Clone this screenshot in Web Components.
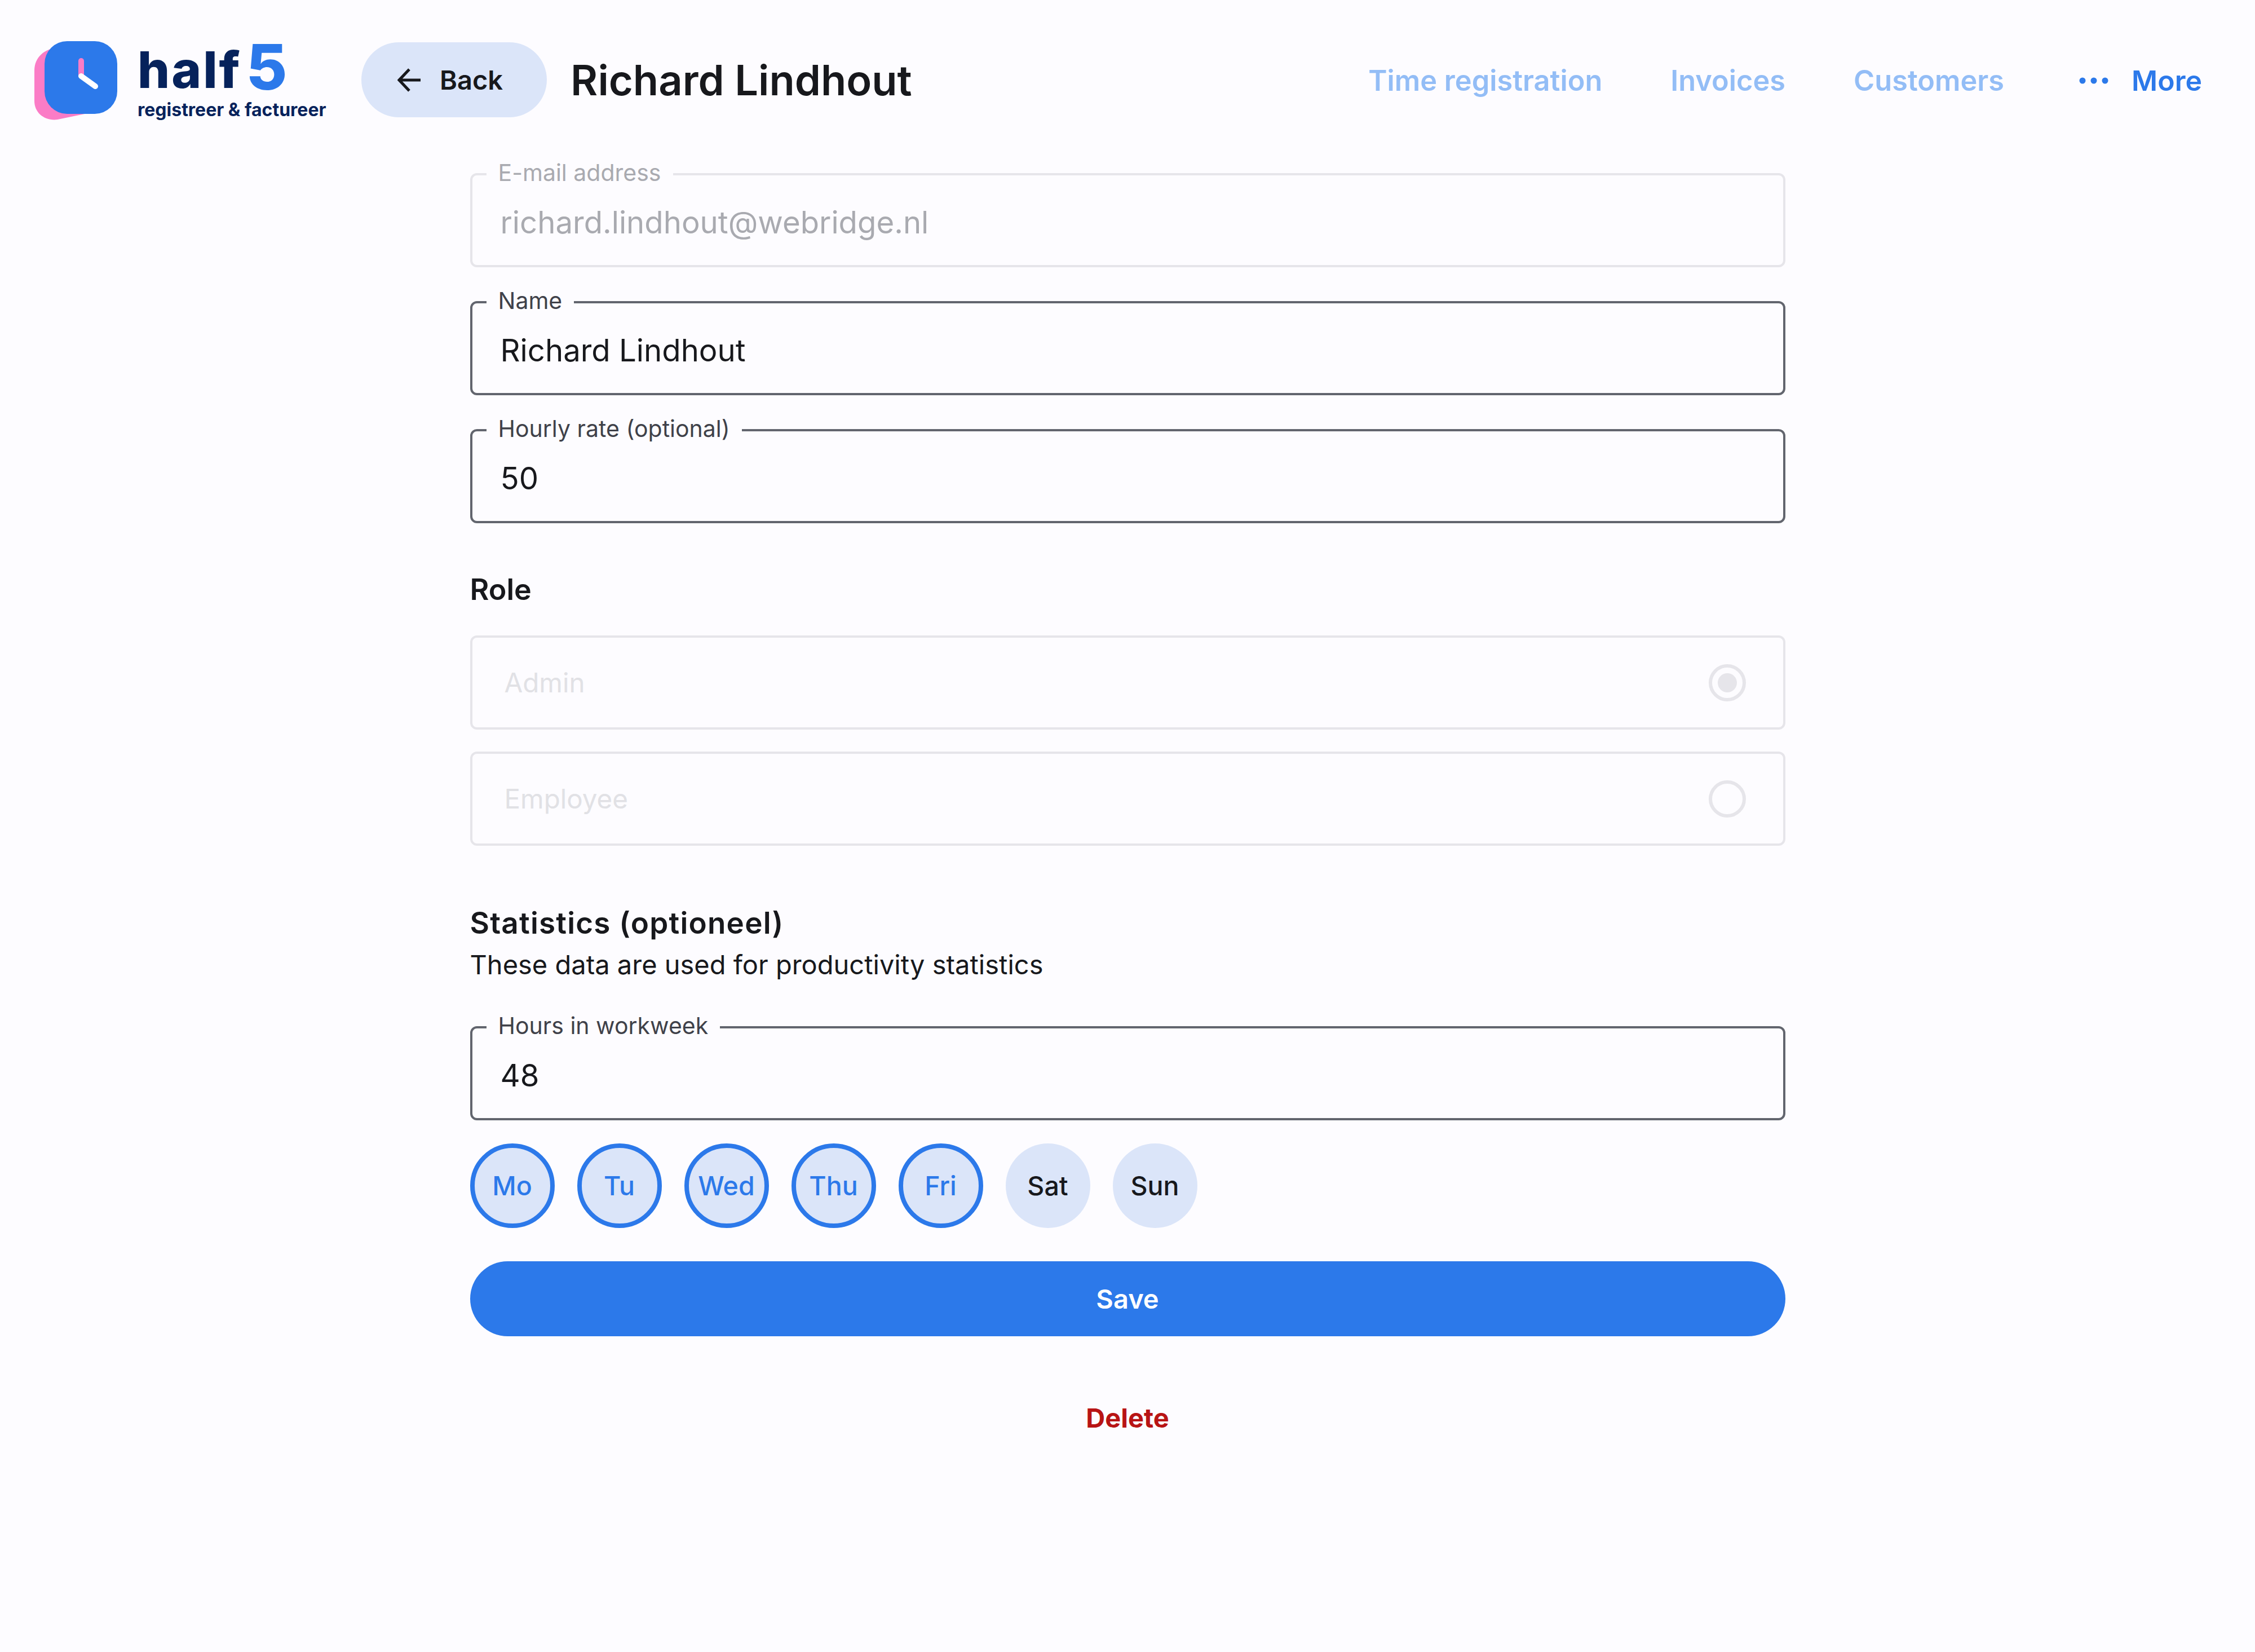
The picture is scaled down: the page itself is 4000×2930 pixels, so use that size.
<!DOCTYPE html>
<html>
<head>
<meta charset="utf-8">
<title>half5</title>
<style>
  html, body { margin: 0; background: #fdfcff; }
  body { font-family: "Inter", "Liberation Sans", sans-serif; color: #17181c; min-height: 2930px; }
</style>
</head>
<body>
<app-page>
  <app-header title="Richard Lindhout"></app-header>
  <main-form></main-form>
</app-page>
<script>
class AppPage extends HTMLElement {
  constructor() {
    super();
    this.attachShadow({ mode: "open" });
    this.shadowRoot.innerHTML = `
      <style>:host { display: block; }</style>
      <slot></slot>
    `;
  }
}

class BrandLogo extends HTMLElement {
  constructor() {
    super();
    this.attachShadow({ mode: "open" });
    this.shadowRoot.innerHTML = `
      <style>
        :host { display: flex; align-items: flex-start; gap: 35px; width: 520px; }
        svg { display: block; }
        .text { display: flex; flex-direction: column; }
        .name { display: flex; align-items: flex-end; height: 90px; color: #06225b; font-family: "Inter", sans-serif; font-weight: 800; font-size: 90px; line-height: 90px; letter-spacing: 3px; margin-top: 6px; }
        .five { color: #2c79ea; font-size: 112px; line-height: 90px; letter-spacing: 0; margin-left: 8px; position: relative; top: -6px; }
        .tag { color: #06225b; font-family: "Inter", sans-serif; font-weight: 700; font-size: 32px; line-height: 40px; margin-top: 6px; white-space: nowrap; }
      </style>
      <svg width="149" height="140" viewBox="0 0 149 140">
        <path d="M45 11C18 13 1 29 1 52V106C1 128 20 142 42 139L100 127V11Z" fill="#fb7cc6"/>
        <rect x="19" y="0" width="129" height="129" rx="40" fill="#2c79ea"/>
        <path d="M84 35V60" stroke="#fb7cc6" stroke-width="10" stroke-linecap="round"/>
        <path d="M84 62L109 80" stroke="#fff" stroke-width="10" stroke-linecap="round"/>
      </svg>
      <div class="text">
        <div class="name"><span>half</span><span class="five">5</span></div>
        <div class="tag">registreer &amp; factureer</div>
      </div>
    `;
  }
}

class BackButton extends HTMLElement {
  constructor() {
    super();
    this.attachShadow({ mode: "open" });
    this.shadowRoot.innerHTML = `
      <style>
        :host { display: flex; align-items: center; gap: 33px; height: 133px; box-sizing: border-box; padding: 0 78px 0 64px; border-radius: 67px; background: #dbe5f9; font-size: 47px; font-weight: 600; color: #17181c; }
        svg { display: block; }
      </style>
      <svg width="42" height="42" viewBox="0 0 42 42" fill="none" stroke="#17181c" stroke-width="5">
        <path d="M41 21H4M21 2L3 21L21 40"/>
      </svg>
      <span><slot></slot></span>
    `;
  }
}

class NavLink extends HTMLElement {
  constructor() {
    super();
    this.attachShadow({ mode: "open" });
    this.shadowRoot.innerHTML = `
      <style>
        :host { display: block; color: #93bdf6; font-size: 50.5px; font-weight: 600; white-space: nowrap; }
      </style>
      <slot></slot>
    `;
  }
}

class MoreMenu extends HTMLElement {
  constructor() {
    super();
    this.attachShadow({ mode: "open" });
    this.shadowRoot.innerHTML = `
      <style>
        :host { display: flex; align-items: center; gap: 41px; color: #2c79ea; font-size: 50px; font-weight: 600; }
        svg { display: block; }
      </style>
      <svg width="52" height="12" viewBox="0 0 52 12" fill="#2c79ea">
        <circle cx="6" cy="6" r="5.5"/><circle cx="26" cy="6" r="5.5"/><circle cx="46" cy="6" r="5.5"/>
      </svg>
      <span>More</span>
    `;
  }
}

class AppHeader extends HTMLElement {
  constructor() {
    super();
    this.attachShadow({ mode: "open" });
    this.shadowRoot.innerHTML = `
      <style>
        :host { display: flex; align-items: center; padding: 74px 94px 0 60px; height: 139px; }
        back-button { margin-left: 61px; margin-top: -4px; }
        h1 { margin: -4px 0 0 42px; font-size: 74px; font-weight: 600; color: #17181c; }
        nav { margin-left: auto; display: flex; align-items: center; gap: 121px; margin-top: -2px; }
        more-menu { margin-left: 12px; }
      </style>
      <brand-logo></brand-logo>
      <back-button>Back</back-button>
      <h1>${this.getAttribute("title")}</h1>
      <nav>
        <nav-link>Time registration</nav-link>
        <nav-link>Invoices</nav-link>
        <nav-link>Customers</nav-link>
        <more-menu></more-menu>
      </nav>
    `;
  }
}

class TextField extends HTMLElement {
  constructor() {
    super();
    this.attachShadow({ mode: "open" });
    const disabled = this.hasAttribute("disabled");
    this.shadowRoot.innerHTML = `
      <style>
        :host { display: block; position: relative; box-sizing: border-box; height: 167px; border: 4px solid ${disabled ? "#e6e5ea" : "#62656e"}; border-radius: 12px; }
        .label { position: absolute; left: 25px; top: -29px; padding: 0 21px; background: #fdfcff; color: ${disabled ? "#a9aab0" : "#3f4149"}; font-size: 41px; line-height: 48px; white-space: nowrap; }
        .value { display: flex; align-items: center; height: 100%; padding: 0 0 0 50px; margin-top: 3px; font-size: 54.5px; color: ${disabled ? "#a9aab0" : "#17181c"}; }
      </style>
      <div class="label">${this.getAttribute("label")}</div>
      <div class="value"><slot></slot></div>
    `;
  }
}

class RadioRow extends HTMLElement {
  constructor() {
    super();
    this.attachShadow({ mode: "open" });
    this.shadowRoot.innerHTML = `
      <style>
        :host { display: flex; align-items: center; justify-content: space-between; box-sizing: border-box; height: 167px; border: 4px solid #e6e5ea; border-radius: 12px; padding: 0 66px 0 57px; color: #e1e1e5; font-size: 47.5px; }
        .dot { box-sizing: border-box; width: 66px; height: 66px; border: 6px solid #e6e5ea; border-radius: 50%; display: flex; align-items: center; justify-content: center; }
        .dot i { display: ${this.hasAttribute("checked") ? "block" : "none"}; width: 34px; height: 34px; border-radius: 50%; background: #e6e5ea; }
      </style>
      <span><slot></slot></span>
      <div class="dot"><i></i></div>
    `;
  }
}

class DayPill extends HTMLElement {
  constructor() {
    super();
    this.attachShadow({ mode: "open" });
    const on = this.hasAttribute("on");
    this.shadowRoot.innerHTML = `
      <style>
        :host { display: flex; align-items: center; justify-content: center; box-sizing: border-box; width: 150px; height: 150px; border-radius: 50%; background: #dbe5f9; font-size: 46.5px; font-weight: 500; color: ${on ? "#2c79ea" : "#17181c"}; border: ${on ? "8px solid #2c79ea" : "none"}; }
      </style>
      <slot></slot>
    `;
  }
}

class SaveButton extends HTMLElement {
  constructor() {
    super();
    this.attachShadow({ mode: "open" });
    this.shadowRoot.innerHTML = `
      <style>
        :host { display: flex; align-items: center; justify-content: center; height: 133px; border-radius: 67px; background: #2c79ea; color: #fff; font-size: 47px; font-weight: 600; }
      </style>
      <slot></slot>
    `;
  }
}

class MainForm extends HTMLElement {
  constructor() {
    super();
    this.attachShadow({ mode: "open" });
    this.shadowRoot.innerHTML = `
      <style>
        :host { display: block; width: 2333px; margin: 94px auto 0; }
        .fields { display: flex; flex-direction: column; gap: 60px; }
        h2 { margin: 0; font-size: 52px; line-height: 68px; font-weight: 600; color: #17181c; }
        .role { margin-top: 84px; margin-bottom: 47px; }
        .radios { display: flex; flex-direction: column; gap: 39px; }
        .stats { margin-top: 103px; font-size: 53px; letter-spacing: 1.2px; }
        p { margin: 8px 0 77px; font-size: 47px; line-height: 64px; color: #17181c; }
        .days { display: flex; gap: 40px; margin: 41px 0 59px; }
        .delete { margin-top: 113px; text-align: center; color: #b81414; font-size: 47px; line-height: 64px; font-weight: 700; }
      </style>
      <div class="fields">
        <text-field label="E-mail address" disabled>richard.lindhout@webridge.nl</text-field>
        <text-field label="Name">Richard Lindhout</text-field>
        <text-field label="Hourly rate (optional)">50</text-field>
      </div>
      <h2 class="role">Role</h2>
      <div class="radios">
        <radio-row checked>Admin</radio-row>
        <radio-row>Employee</radio-row>
      </div>
      <h2 class="stats">Statistics (optioneel)</h2>
      <p>These data are used for productivity statistics</p>
      <text-field label="Hours in workweek">48</text-field>
      <div class="days">
        <day-pill on>Mo</day-pill>
        <day-pill on>Tu</day-pill>
        <day-pill on>Wed</day-pill>
        <day-pill on>Thu</day-pill>
        <day-pill on>Fri</day-pill>
        <day-pill>Sat</day-pill>
        <day-pill>Sun</day-pill>
      </div>
      <save-button>Save</save-button>
      <div class="delete">Delete</div>
    `;
  }
}

customElements.define("app-page", AppPage);
customElements.define("brand-logo", BrandLogo);
customElements.define("back-button", BackButton);
customElements.define("nav-link", NavLink);
customElements.define("more-menu", MoreMenu);
customElements.define("app-header", AppHeader);
customElements.define("text-field", TextField);
customElements.define("radio-row", RadioRow);
customElements.define("day-pill", DayPill);
customElements.define("save-button", SaveButton);
customElements.define("main-form", MainForm);
</script>
</body>
</html>
